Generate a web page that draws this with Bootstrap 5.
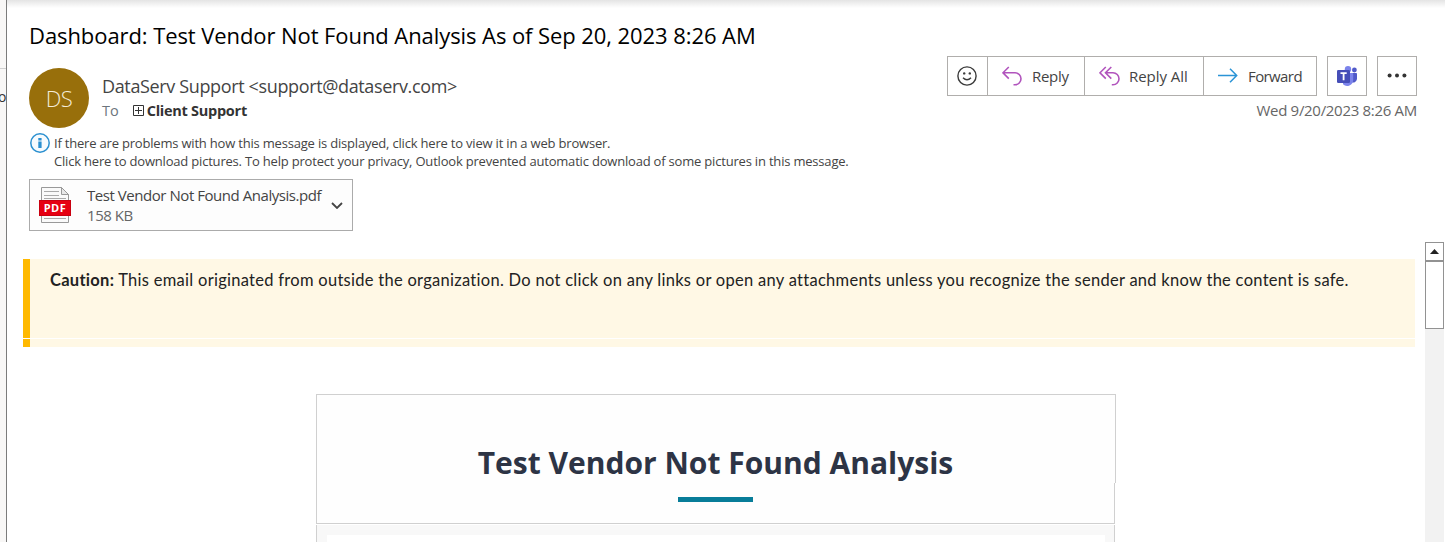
<!DOCTYPE html>
<html lang="en">
<head>
<meta charset="utf-8">
<meta name="viewport" content="width=device-width, initial-scale=1">
<title>Dashboard: Test Vendor Not Found Analysis</title>
<link href="https://cdn.jsdelivr.net/npm/bootstrap@5.3.0/dist/css/bootstrap.min.css" rel="stylesheet">
<style>
body{font-family:"Open Sans","Noto Sans",sans-serif;color:#444;background:#fff;height:542px;overflow:hidden}
.list-edge{width:7px;background:#f8f7f6;border-right:1px solid #7b7b7b}
.list-edge .edge-top{height:69px;border-bottom:1px solid #d0d0d0}
.list-edge span{display:block;font-size:14px;line-height:20px;margin:18px 0 0 -2px;color:#333}
.top-shade{height:8px;background:linear-gradient(#e4e4e4,#fff)}
.reader{min-width:0}
.msg-head{padding:0 28px 0 22px}
.subject{font-size:22px;line-height:30px;color:#000;margin-top:12px;height:31px;letter-spacing:-.08px;white-space:nowrap;font-weight:400;margin-bottom:0}
.head-row{margin-top:5px;height:76px}
.avatar-ds{width:60px;height:60px;margin-top:12px;background:#986f0b;color:#f5ecd8;font-size:22px;font-weight:300;letter-spacing:-.5px}
.who{margin:19px 0 0 13px;white-space:nowrap}
.from-line{font-size:18px;line-height:22px;letter-spacing:-.36px}
.to-line{font-size:14.5px;line-height:22px;margin-top:3px}
.to-line b{font-weight:700;color:#333;letter-spacing:-.27px;margin-left:3px}
.to-line svg{margin:-1px 0 0 14px}
.act{height:40px;border:1px solid #b0aeac;background:#fff;color:#444;font-size:15px;letter-spacing:-.4px;line-height:38px;padding:0;border-radius:0;white-space:nowrap;display:flex;align-items:center}
.act+.act{border-left:0}
.act-sq{width:40px;justify-content:center}
.act.act-solo{margin-left:10px;border-left:1px solid #b0aeac}
.act-react{width:41px;padding-left:9px}
.act-reply{width:97px;padding-left:14px;letter-spacing:-.3px}
.act-all{width:119px;padding-left:14px;letter-spacing:-.05px}
.act-fwd{width:113px;padding-left:14px;letter-spacing:-.6px}
.stamp{font-size:15px;line-height:20px;color:#666;letter-spacing:-.3px;margin-top:4px;white-space:nowrap}
.info{height:36px;margin-top:3px;font-size:13px;line-height:18px;white-space:nowrap}
.info-text{margin:-1px 0 0 3px;letter-spacing:-.194px}
.attach{width:324px;height:52px;border:1px solid #ababab;background:#fdfdfd;margin-top:8px;padding-left:9px}
.attach svg{flex-shrink:0}
.attach-text{margin:5px 0 0 16px;font-size:15px;line-height:20px;white-space:nowrap;letter-spacing:-.45px}
.mail-body{height:300px;margin-top:11px}
.scroller{width:19px;background:#f2f2f2;margin-right:1px}
.scroll-up{height:19px;border:1px solid #929292;background:#fff}
.scroll-thumb{height:68px;border:1px solid #929292;background:#fff}
.caution{margin:17px 10px 0 16px;font-family:Lato,sans-serif;color:#222}
.caution-main{height:79px;border-left:7px solid #ffb900;background:#fff8e5;padding:10px 0 0 20px;font-size:16.5px;letter-spacing:.28px;line-height:23px;white-space:nowrap}
.caution-end{height:8px;margin-top:1px;border-left:7px solid #ffb900;background:#fff8e5}
.report{width:800px;margin:47px 0 0 309px}
.report-head{height:89px;border:1px solid #d0d0d0;border-bottom:0;background:#fefefe;padding:47px 1px 0 0}
.report-head h1{font-size:30px;font-weight:700;line-height:42px;color:#2d3445;margin:0;text-align:center;white-space:nowrap}
.report-foot{width:799px;height:41px;border:1px solid #d0d0d0;border-top:0;background:#fefefe;padding-top:14px}
.rule{width:75px;height:5px;background:#087d99;margin-left:361px}
.report-body{width:799px;height:18px;margin-top:1px;border:solid #d0d0d0;border-width:0 1px;background:#f8f8f8;padding:10px 9px 0 10px}
</style>
</head>
<body class="d-flex">
<aside class="list-edge flex-shrink-0"><div class="edge-top"></div><span>o</span></aside>
<main class="reader flex-grow-1">
  <div class="top-shade"></div>
  <header class="msg-head">
    <h2 class="subject">Dashboard: Test Vendor Not Found Analysis As of Sep 20, 2023 8:26 AM</h2>
    <div class="head-row d-flex">
      <div class="avatar-ds rounded-circle d-flex align-items-center justify-content-center flex-shrink-0">DS</div>
      <div class="who">
        <div class="from-line">DataServ Support &lt;support@dataserv.com&gt;</div>
        <div class="to-line d-flex align-items-center"><span class="text-secondary">To</span>
          <svg width="11" height="11" viewBox="0 0 11 11" fill="none" stroke="#333"><path d="M.5.5h10v10H.5zM2 5.5h7M5.5 2v7"/></svg><b>Client Support</b></div>
      </div>
      <div class="ms-auto d-flex flex-column align-items-end">
        <div class="d-flex">
          <div class="d-flex">
            <button class="act act-react" aria-label="React"><svg width="20" height="20" viewBox="0 0 20 20" fill="none" stroke="#3b3b3b" stroke-width="1.4"><circle cx="10" cy="10" r="9.1"/><path d="M6 11.8q4 4 8 0"/><g fill="#3b3b3b" stroke="none"><circle cx="7.2" cy="7.4" r="1.2"/><circle cx="12.8" cy="7.4" r="1.2"/></g></svg></button>
            <button class="act act-reply"><svg width="20" height="20" viewBox="0 0 20 20" fill="none" stroke="#b154bd" stroke-width="1.6"><path d="M6.8 1 1 6.8l5.8 5.8M1.2 6.8H13a6 6 0 0 1 0 12h-1.5"/></svg><span style="margin-left:10px">Reply</span></button>
            <button class="act act-all"><svg width="21" height="20" viewBox="0 0 21 20" fill="none" stroke="#b154bd" stroke-width="1.6"><path d="M6.8 1 1 6.8l5.8 5.8M12.3 1 6.5 6.8l5.8 5.8M6.7 6.8H14a6 6 0 0 1 0 12h-1.2"/></svg><span style="margin-left:9px">Reply All</span></button>
            <button class="act act-fwd"><svg width="20" height="20" viewBox="0 0 20 20" fill="none" stroke="#2b94d6" stroke-width="1.5"><path d="M0 9.5h18.3M12 2.8l6.7 6.7-6.7 6.7"/></svg><span style="margin-left:10px">Forward</span></button>
          </div>
          <button class="act act-sq act-solo" aria-label="Teams"><svg width="20" height="20" viewBox="0 0 20 20"><circle cx="17.4" cy="4" r="2.4" fill="#5059c9"/><path d="M14 7h5.2q.8 0 .8.8V13a4 4 0 0 1-6 3z" fill="#5059c9"/><circle cx="11" cy="3.2" r="3.2" fill="#7b83eb"/><path d="M6 7h9.3q.9 0 .9.9V14a6 6 0 0 1-10.2 4.2z" fill="#7b83eb"/><rect y="4" width="13" height="13" rx="1.2" fill="#464eb8"/><path d="M3.5 7.2h6.2M6.6 7v7.2" stroke="#fff" stroke-width="1.8"/></svg></button>
          <button class="act act-sq act-solo" aria-label="More"><svg width="20" height="6" viewBox="0 0 20 6" fill="#333"><circle cx="2.6" cy="2.5" r="2"/><circle cx="10" cy="2.5" r="2"/><circle cx="17.4" cy="2.5" r="2"/></svg></button>
        </div>
        <div class="stamp">Wed 9/20/2023 8:26 AM</div>
      </div>
    </div>
    <div class="info d-flex"><svg class="flex-shrink-0" width="22" height="22" viewBox="0 0 22 22" style="margin-top:-2px"><circle cx="11" cy="10" r="9.2" fill="#f7fbfe" stroke="#2b90d0" stroke-width="1.5"/><path d="M9.3 8.6h3.3V15H9.3zM9.3 5h3.3v2.4H9.3z" fill="#2b90d0"/></svg>
      <div class="info-text"><div>If there are problems with how this message is displayed, click here to view it in a web browser.</div><div>Click here to download pictures. To help protect your privacy, Outlook prevented automatic download of some pictures in this message.</div></div></div>
    <div class="attach d-flex">
      <svg style="margin-top:7px" width="32" height="37" viewBox="0 0 32 37"><path d="M2.5.5h20l7 7v28h-27z" fill="#fafafa" stroke="#999"/><path d="M22.5.5v7h7z" fill="#e8e8e8" stroke="#999"/><path d="M5 4.5h15M5 8.5h15M5 11.5h22M5 31.5h22" stroke="#aaa"/><rect y="13" width="32" height="16" fill="#c90010"/><rect x="1" y="14" width="30" height="14" fill="#e60012"/><text x="16" y="25" text-anchor="middle" font-family="Open Sans" font-weight="700" font-size="11" letter-spacing=".5" fill="#fff">PDF</text></svg>
      <div class="attach-text"><div>Test Vendor Not Found Analysis.pdf</div><div style="color:#666">158 KB</div></div>
      <svg class="ms-auto align-self-center" style="margin-right:9px" width="12" height="8" viewBox="0 0 12 8" fill="none" stroke="#444" stroke-width="1.8"><path d="m1 2 5 5 5-5"/></svg>
    </div>
  </header>
  <div class="mail-body d-flex">
    <div class="flex-grow-1">
      <section class="caution"><div class="caution-main"><strong>Caution:</strong> This email originated from outside the organization. Do not click on any links or open any attachments unless you recognize the sender and know the content is safe.</div><div class="caution-end"></div></section>
      <section class="report">
        <div class="report-head"><h1>Test Vendor Not Found Analysis</h1></div>
        <div class="report-foot"><div class="rule"></div></div>
        <div class="report-body"><div class="bg-white h-100"></div></div>
      </section>
    </div>
    <div class="scroller flex-shrink-0"><div class="scroll-up d-flex justify-content-center align-items-center"><svg width="9" height="5" viewBox="0 0 9 5"><path d="M0 5 4.5 0 9 5z" fill="#222"/></svg></div><div class="scroll-thumb"></div></div>
  </div>
</main>
<script src="https://cdn.jsdelivr.net/npm/bootstrap@5.3.0/dist/js/bootstrap.bundle.min.js"></script>
</body>
</html>
